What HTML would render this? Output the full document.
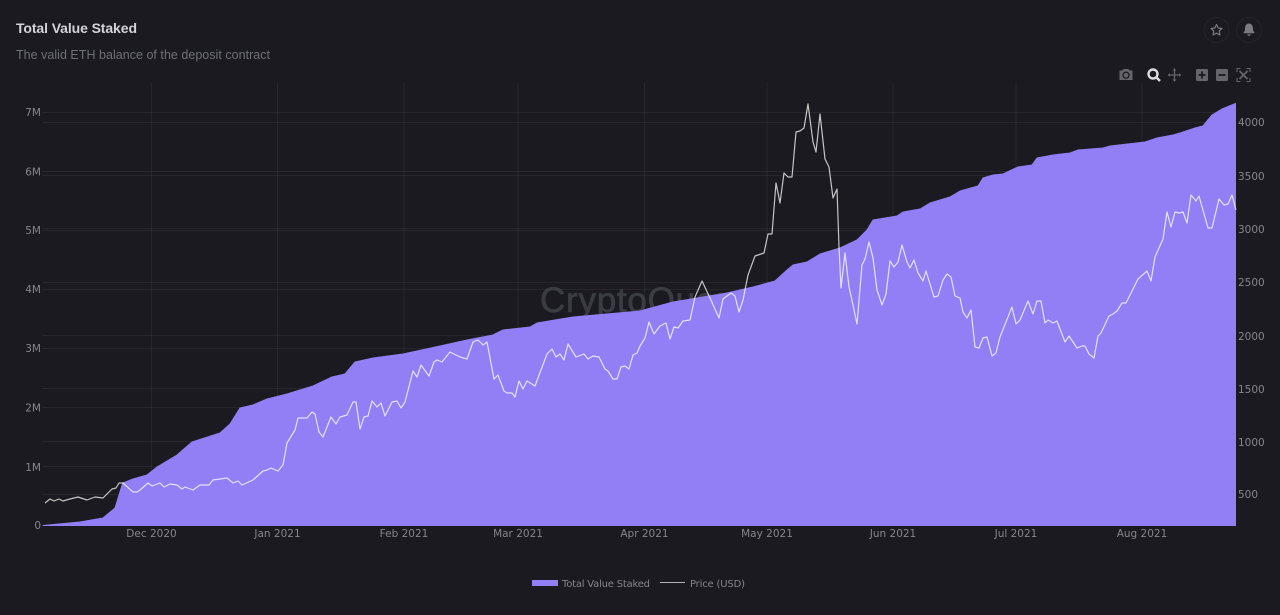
<!DOCTYPE html>
<html><head><meta charset="utf-8"><style>
html,body{margin:0;padding:0;background:#1a1a20;width:1280px;height:615px;overflow:hidden}
svg{display:block;filter:blur(.35px)}
.t{font-family:"DejaVu Sans",sans-serif;font-size:10.5px;fill:#85858b}
.g{stroke:#fff;stroke-opacity:.055;stroke-width:1;fill:none}
</style></head><body>
<svg width="1280" height="615" viewBox="0 0 1280 615" xmlns="http://www.w3.org/2000/svg">
<rect width="1280" height="615" fill="#1a1a20"/>
<text x="16" y="33" font-family="'Liberation Sans',sans-serif" font-weight="700" font-size="14" fill="#d4d4d8" textLength="121">Total Value Staked</text>
<text x="16" y="59" font-family="'Liberation Sans',sans-serif" font-size="12.5" fill="#6f6f77" textLength="254">The valid ETH balance of the deposit contract</text>

<path class="g" d="M151.500 83V525M277.500 83V525M404 83V525M518 83V525M644.500 83V525M767 83V525M893 83V525M1016 83V525M1142 83V525"/>
<path class="g" d="M42 112.500H1236M42 171.500H1236M42 230.500H1236M42 289.500H1236M42 348.500H1236M42 407.500H1236M42 466.500H1236"/>
<path class="g" d="M42 122.500H1236M42 175.500H1236M42 228.500H1236M42 282.500H1236M42 335.500H1236M42 388.500H1236M42 441.500H1236M42 494.500H1236"/>

<text x="540" y="312" font-family="'Liberation Sans',sans-serif" font-size="35" fill="#3b3b43" stroke="#3b3b43" stroke-width=".7" textLength="206">CryptoQuant</text>

<path fill="#937ff5" stroke="#937ff5" stroke-width="1" stroke-linejoin="round" d="M43 525.500L80 522L103 518L115 508L122.700 483L133 479L147 475L157 467L177 455L192 442L220 433L230 424L240 408L253 405L267 399L287 394L313 386L332 377L345 374L355 362L373 358L403 354L440 346L467 340L493 335L503 330L530 327L537 323L573 317L640 311L673 302L697 298L727 293L753 287L775 281L787 270L793 265L807 262L820 254L840 248L857 240L867 230L873 220L897 216L903 212L920 209L930 203L950 197L960 191L978 186L983 178L993 175L1003 174L1018 167L1032 165L1037 158L1053 155L1070 153L1078 150L1103 148L1110 146L1145 142L1157 138L1173 135L1180 133L1195 128L1203 126L1212 115L1222 109L1235.500 103.500V525.500H43Z"/>

<path fill="none" stroke="#fff" stroke-opacity=".75" stroke-width="1.200" stroke-linejoin="round" d="M45 503L50 499L54 501L59 499L63 501L70 499L78 497L87 500L95 497L103 498L112 489L116 488L119 483L123 483L133 492L137 492L140 490L148 483L152 486L160 483L164 487L170 484L177 485L182 489L185 487L193 490L200 485L209 485L213 480L227 478L233 483L238 481L242 485L253 480L263 471L267 470L271 468L278 471L283 465L287 443L295 430L298 418L307 418L312 412L315 414L319 432L323 437L331 417L336 424L340 417L347 415L353 402L356 402L360 429L364 417L368 416L372 401L377 407L381 403L385 416L392 402L397 401L401 408L405 402L413 371L417 377L421 365L429 376L434 362L437 360L442 362L450 352L460 357L467 359L473 342L478 340L483 345L487 342L494 379L498 375L504 391L507 393L512 393L515 397L519 381L523 389L527 381L535 386L547 354L552 349L556 357L560 354L564 360L568 344L576 357L584 354L588 359L593 356L599 357L605 369L608 371L613 379L617 379L621 367L625 366L629 369L633 355L637 353L640 346L645 338L649 322L654 334L660 326L666 323L670 339L674 327L678 328L683 321L690 320L695 297L702 281L710 298L719 318L723 299L731 293L735 296L739 312L743 300L748 275L755 256L764 253L768 234L772 234L776 183L780 203L784 173L788 177L792 177L796 132L800 131L804 128L808 104L813 142L816 152L820 114L825 159L829 167L833 198L837 189L839 247L841 288L845 253L849 287L853 305L857 324L862 265L865 259L869 242L873 258L877 290L882 305L886 294L890 261L894 267L898 262L902 245L907 262L910 268L914 260L918 273L923 281L926 271L934 297L938 296L943 280L947 274L951 277L955 296L960 298L963 312L967 318L971 310L975 347L979 348L983 338L987 337L992 356L996 353L1000 337L1012 307L1016 324L1020 320L1028 301L1033 314L1037 301L1041 301L1045 323L1048 320L1053 323L1057 321L1065 342L1069 336L1077 348L1082 346L1085 346L1089 354L1094 358L1098 336L1101 333L1109 316L1113 314L1117 311L1122 303L1126 303L1138 279L1147 271L1151 281L1155 257L1163 239L1167 212L1171 227L1175 212L1179 213L1183 212L1187 223L1191 195L1196 201L1199 196L1208 228L1212 228L1219 199L1224 205L1228 204L1232 195L1236 210"/>

<g class="t" text-anchor="end">
<text x="41" y="116">7M</text><text x="41" y="175.500">6M</text><text x="41" y="234">5M</text><text x="41" y="293">4M</text><text x="41" y="352">3M</text><text x="41" y="411.500">2M</text><text x="41" y="471">1M</text><text x="41" y="529">0</text>
</g>
<g class="t">
<text x="1238" y="126">4000</text><text x="1238" y="180">3500</text><text x="1238" y="233">3000</text><text x="1238" y="286">2500</text><text x="1238" y="340">2000</text><text x="1238" y="393">1500</text><text x="1238" y="446">1000</text><text x="1238" y="498">500</text>
</g>
<g class="t" text-anchor="middle">
<text x="151.500" y="537">Dec 2020</text><text x="277.500" y="537">Jan 2021</text><text x="404" y="537">Feb 2021</text><text x="518" y="537">Mar 2021</text><text x="644.500" y="537">Apr 2021</text><text x="767" y="537">May 2021</text><text x="893" y="537">Jun 2021</text><text x="1016" y="537">Jul 2021</text><text x="1142" y="537">Aug 2021</text>
</g>

<rect x="532" y="580" width="26" height="6" fill="#937ff5"/>
<text x="562" y="587" font-family="'DejaVu Sans',sans-serif" font-size="10" fill="#85858b" textLength="88">Total Value Staked</text>
<path d="M660 582.500H685" stroke="#b4b4b8" stroke-width="1"/>
<text x="690" y="587" font-family="'DejaVu Sans',sans-serif" font-size="10" fill="#85858b" textLength="55">Price (USD)</text>

<circle cx="1216.500" cy="30" r="12.500" fill="none" stroke="#24242b" stroke-width="1"/>
<circle cx="1249" cy="30" r="12.500" fill="none" stroke="#24242b" stroke-width="1"/>
<path d="M1216.500 24.500L1218.200 28L1222 28.500L1219.200 31.100L1219.900 35L1216.500 33.100L1213.100 35L1213.800 31.100L1211 28.500L1214.800 28Z" fill="none" stroke="#7a7a80" stroke-width="1.200" stroke-linejoin="round"/>
<path d="M1249 23.500C1245.800 23.500 1245 26.500 1245 29C1245 31 1244 32 1243.200 33.300H1254.800C1254 32 1253 31 1253 29C1253 26.500 1252.200 23.500 1249 23.500Z" fill="#7a7a80"/>
<path d="M1247.300 34.300H1250.700C1250.700 36.300 1247.300 36.300 1247.300 34.300Z" fill="#7a7a80"/>

<path d="M1119.500 70.500H1122.500L1123.500 69H1128.500L1129.500 70.500H1132.500V80H1119.500Z" fill="#65656b"/>
<circle cx="1126" cy="75.200" r="3" fill="none" stroke="#1a1a20" stroke-width="1.300"/>
<circle cx="1153" cy="74" r="4.500" fill="none" stroke="#dedee0" stroke-width="2.400"/>
<path d="M1156.500 77.500L1160 81" stroke="#dedee0" stroke-width="2.400"/>
<path d="M1174.500 68.500V81.500M1168 75H1181" stroke="#65656b" stroke-width="1.300"/>
<path d="M1172.500 70.500L1174.500 68.500L1176.500 70.500ZM1172.500 79.500L1174.500 81.500L1176.500 79.500ZM1170 73L1168 75L1170 77ZM1179 73L1181 75L1179 77Z" fill="#65656b"/>
<rect x="1196" y="69" width="12" height="12" rx="1" fill="#65656b"/>
<path d="M1198.500 75H1205.500M1202 71.500V78.500" stroke="#1a1a20" stroke-width="1.800"/>
<rect x="1216" y="69" width="12" height="12" rx="1" fill="#65656b"/>
<path d="M1218.500 75H1225.500" stroke="#1a1a20" stroke-width="1.800"/>
<path d="M1237 72V68.500H1240.500M1246.500 68.500H1250V72M1250 78V81.500H1246.500M1240.500 81.500H1237V78" fill="none" stroke="#65656b" stroke-width="1"/>
<path d="M1239.500 71L1247.500 79M1247.500 71L1239.500 79" stroke="#65656b" stroke-width="1.800"/>
</svg>
</body></html>
